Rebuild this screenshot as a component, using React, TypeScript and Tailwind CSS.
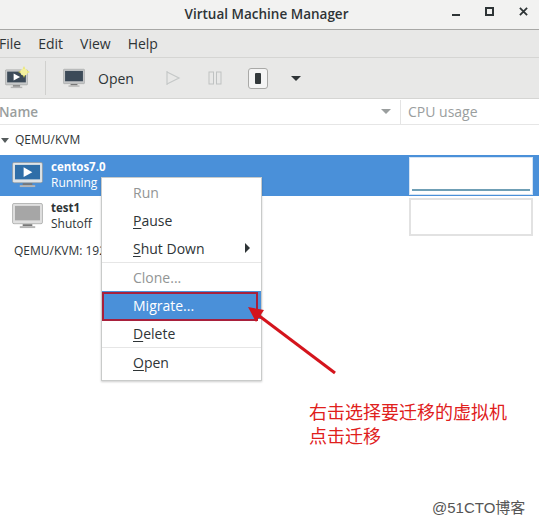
const font = { fontFamily: '"Open Sans", "Noto Sans", sans-serif' }

function Monitor({ screen, body, play, className }: { screen: string; body: string; play?: boolean; className?: string }) {
  return (
    <svg viewBox="0 0 32 28" className={className}>
      <rect x="0.5" y="0.5" width="31" height="21" rx="1.5" fill={body} stroke="#8c8f8c" strokeWidth="0.6" />
      <rect x="3" y="3" width="26" height="15" fill={screen} />
      {play && <path d="M12 5.5 L21 10.5 L12 15.5 Z" fill="#fff" />}
      <rect x="11" y="22" width="10" height="2" fill="#777" />
      <rect x="8" y="24" width="16" height="2" fill="#b5b5b5" />
    </svg>
  )
}

function MenuItem({ label, u, rest, disabled, arrow }: { label?: string; u?: string; rest?: string; disabled?: boolean; arrow?: boolean }) {
  return (
    <div className={`flex h-[28px] items-center justify-between pl-[31px] pr-[11px] text-[14px] ${disabled ? 'text-[#929595]' : 'text-[#2e3436]'}`}>
      <span>
        {label}
        {u && <span className="underline underline-offset-2">{u}</span>}
        {rest}
      </span>
      {arrow && <span className="h-0 w-0 border-y-[5px] border-l-[5px] border-y-transparent border-l-[#2e3436]" />}
    </div>
  )
}

export default function App() {
  return (
    <div className="relative h-[525px] w-[539px] overflow-hidden bg-white" style={font}>
      {/* title bar */}
      <div className="relative flex h-[30px] items-center justify-center border-b border-[#a8a8a6] bg-[#f2f2f1] pr-[6px] text-[13.5px] font-semibold text-[#2e3436]">
        Virtual Machine Manager
        <div className="absolute right-[11px] top-[7px] flex items-center gap-[25px]">
          <span className="mt-[6px] h-[2px] w-[8px] bg-[#2e3436]" />
          <span className="h-[9px] w-[9px] border-2 border-[#2e3436]" />
          <svg viewBox="0 0 10 10" className="h-[9px] w-[9px]">
            <path d="M1 1 L9 9 M9 1 L1 9" stroke="#2e3436" strokeWidth="2" />
          </svg>
        </div>
      </div>

      {/* menu bar */}
      <div className="flex h-[28px] items-center gap-[17px] border-b border-[#d5d5d3] bg-[#e8e8e7] pb-[1px] text-[14px] text-[#2e3436]">
        <span className="-ml-[1px]">File</span>
        <span>Edit</span>
        <span>View</span>
        <span>Help</span>
      </div>

      {/* toolbar */}
      <div className="flex h-[41px] items-center border-b border-[#d5d5d3] bg-[#e8e8e7] text-[14px] text-[#2e3436]">
        <div className="relative ml-[5px] h-[24px] w-[25px]">
          <Monitor screen="#3c4a58" body="#c8cacb" play className="absolute bottom-0 left-0 h-[21px] w-[23px]" />
          <svg viewBox="0 0 12 12" className="absolute right-0 top-0 h-[12px] w-[12px]">
            <path d="M6 0 L7.6 4.4 L12 6 L7.6 7.6 L6 12 L4.4 7.6 L0 6 L4.4 4.4 Z" fill="#e8e44e" />
            <circle cx="6" cy="6" r="3.6" fill="#f3f0a0" />
          </svg>
        </div>
        <span className="ml-[15px] h-[34px] w-px bg-[#d0d0ce]" />
        <Monitor screen="#3c4a58" body="#c4c6c7" className="ml-[17px] h-[21px] w-[22px]" />
        <span className="ml-[13px]">Open</span>
        <svg viewBox="0 0 16 16" className="ml-[31px] h-[16px] w-[16px]">
          <path d="M2 1 V15 M2 2 L14 8 L2 14" fill="none" stroke="#c5c8c8" strokeWidth="1.2" />
        </svg>
        <svg viewBox="0 0 14 14" className="ml-[27px] h-[14px] w-[14px]">
          <rect x="1" y="1" width="4.5" height="12" fill="none" stroke="#bfc2c2" />
          <rect x="8.5" y="1" width="4.5" height="12" fill="none" stroke="#bfc2c2" />
        </svg>
        <span className="ml-[26px] flex h-[21px] w-[20px] items-center justify-center rounded-[3px] border border-[#a9a9a7] bg-[#f4f4f4]">
          <span className="h-[11px] w-[6px] rounded-[1px] bg-[#33393b]" />
        </span>
        <span className="ml-[23px] h-0 w-0 border-x-[5px] border-t-[5px] border-x-transparent border-t-[#2e3436]" />
      </div>

      {/* column headers */}
      <div className="flex h-[26px] items-center border-b border-[#e6e6e6] text-[14px] text-[#9a9e9e]">
        <span className="-ml-[1px] mt-[1px] text-[13.5px] font-semibold">Name</span>
        <span className="ml-auto mr-[9px] h-0 w-0 border-x-[5px] border-t-[5px] border-x-transparent border-t-[#9a9e9e]" />
        <span className="h-[24px] w-px bg-[#e4e4e4]" />
        <span className="ml-[7px] w-[131px]">CPU usage</span>
      </div>

      {/* connection */}
      <div className="flex h-[30px] items-center text-[12px] text-[#2e3436]">
        <span className="ml-[1px] h-0 w-0 border-x-[4px] border-t-[5px] border-x-transparent border-t-[#555b5c]" />
        <span className="ml-[6px]">QEMU/KVM</span>
      </div>

      {/* vm rows */}
      <div className="flex h-[41px] items-center bg-[#4a90d9] pl-[12px] pr-[6px] text-white">
        <Monitor screen="#2f6ea8" body="#dfe3e6" play className="h-[27px] w-[31px]" />
        <div className="mb-[2px] ml-[8px] flex flex-col text-[12px] leading-[16px]">
          <span className="text-[11.5px] font-bold">centos7.0</span>
          <span>Running</span>
        </div>
        <div className="ml-auto flex h-[38px] w-[124px] items-end border border-[#d6e4f3] bg-white px-[2px] pb-[3px]">
          <span className="h-[2px] w-full bg-[#6f9fb5]" />
        </div>
      </div>
      <div className="flex h-[41px] items-center pl-[12px] pr-[6px] text-[#2e3436]">
        <Monitor screen="#a6a6a6" body="#e0e0e0" className="h-[27px] w-[31px]" />
        <div className="mb-[2px] ml-[8px] flex flex-col text-[12px] leading-[16px]">
          <span className="text-[11.5px] font-bold">test1</span>
          <span>Shutoff</span>
        </div>
        <div className="ml-auto h-[38px] w-[124px] border-2 border-[#e2e2e2] bg-white" />
      </div>
      <div className="flex h-[27px] items-center pl-[14px] text-[12px] text-[#2e3436]">QEMU/KVM: 192</div>

      {/* context menu */}
      <div className="absolute left-[101px] top-[177px] flex h-[204px] w-[161px] flex-col border border-[#c9cbca] bg-white shadow-[0_1px_2px_rgba(0,0,0,0.2)]">
        <MenuItem label="Run" disabled />
        <MenuItem u="P" rest="ause" />
        <MenuItem u="S" rest="hut Down" arrow />
        <div className="h-px bg-[#e6e6e6]" />
        <MenuItem label="Clone..." disabled />
        <div className="flex h-[28px] items-center bg-[#4a90d9] pl-[31px] text-[14px] text-white">Migrate...</div>
        <MenuItem u="D" rest="elete" />
        <div className="h-px bg-[#e6e6e6]" />
        <MenuItem u="O" rest="pen" />
      </div>
      {/* red highlight round Migrate */}
      <div className="absolute left-[102px] top-[292px] h-[29px] w-[156px] border-2 border-[#a8203c]" />

      {/* arrow */}
      <svg viewBox="0 0 539 525" className="pointer-events-none absolute left-0 top-0 h-[525px] w-[539px]">
        <path d="M335 373 L258 315" stroke="#d4141c" strokeWidth="3" />
        <path d="M248 307 L264 310 L256 322 Z" fill="#d4141c" />
      </svg>

      {/* annotation */}
      <div className="absolute left-[309px] top-[399px] text-[18px] leading-[24px] text-[#e0201c]" style={{ fontFamily: '"Noto Sans CJK SC", sans-serif' }}>
        <div>右击选择要迁移的虚拟机</div>
        <div>点击迁移</div>
      </div>

      {/* watermark */}
      <div className="absolute left-[432px] top-[499px] text-[15px] leading-[18px] text-[#555]" style={{ fontFamily: '"Liberation Sans", "Noto Sans CJK SC", sans-serif' }}>
        @51CTO博客
      </div>
    </div>
  )
}
